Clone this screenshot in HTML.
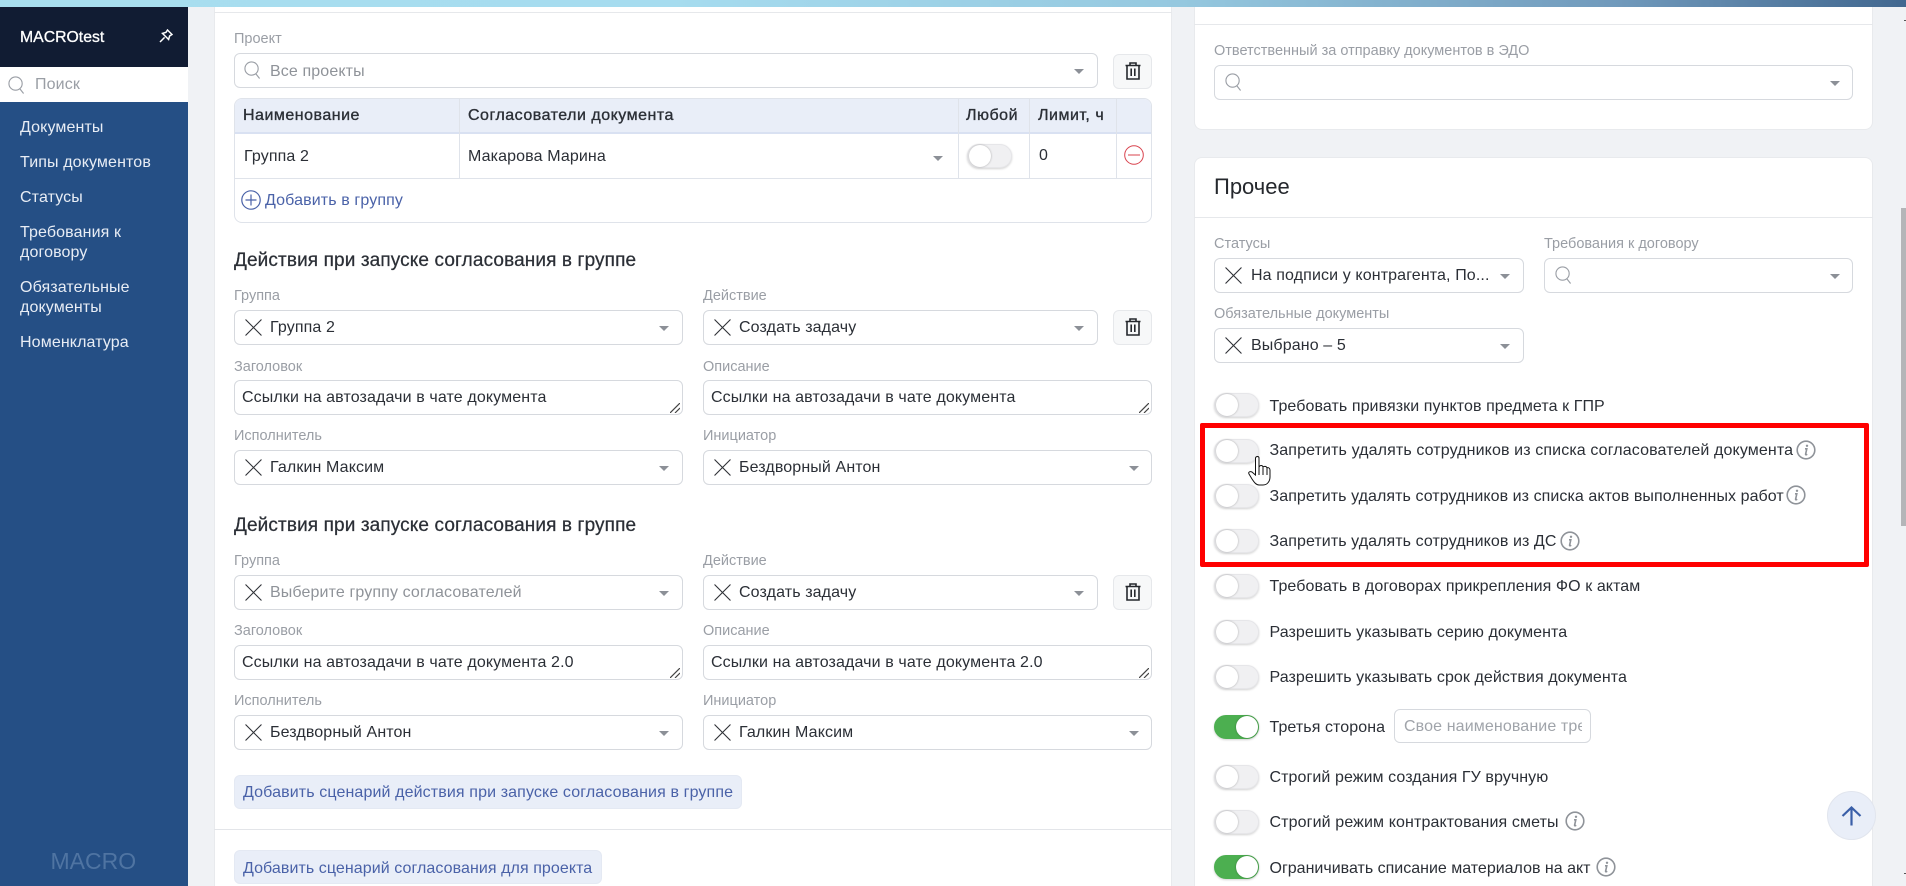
<!DOCTYPE html>
<html lang="ru"><head><meta charset="utf-8"><title>MACRO</title>
<style>
*{box-sizing:border-box}
html,body{margin:0;padding:0;width:1906px;height:886px;overflow:hidden;background:#f0f2f5;font-family:"Liberation Sans","Noto Sans CJK SC",sans-serif;font-size:16px;color:#2b2f36}
.a,.t,.l,.s,.tg,svg.i{position:absolute}
.t{white-space:nowrap;line-height:20px;font-size:16px;letter-spacing:.12px}
.l{white-space:nowrap;line-height:16px;font-size:14.5px;color:#9a9ea5;margin-top:1px}
.s{background:#fff;border:1px solid #d6d9de;border-radius:6px;height:35px}
.tg{width:45px;height:24px;border-radius:12px;background:#f0f0f2;border:1px solid #e6e6e9;box-shadow:0 1px 2px rgba(0,0,0,.18)}
.tg:after{content:"";position:absolute;left:1px;top:0;width:22px;height:22px;border-radius:50%;background:#fff;box-shadow:0 0 2px rgba(0,0,0,.3)}
.tg.on{background:#4caf50;border-color:#4caf50}
.tg.on:after{left:21px}
.h{font-size:19px;letter-spacing:.12px;-webkit-text-stroke:.25px #2b2f36;color:#2b2f36;margin-top:1px}
.b{background:#e9eef8;border:1px solid #e4e9f3;border-radius:6px;position:absolute;height:34px}
.btxt{color:#4a62a8}
.tb{position:absolute;background:#f7f8f9;border:1px solid #e6e8eb;border-radius:6px;width:39px;height:35px}
.th{letter-spacing:.5px;-webkit-text-stroke:.35px #2b2f36}
.n{color:#e8edf5;margin-top:1px}
.r{left:1269.5px;letter-spacing:.08px}
</style></head><body>
<svg width="0" height="0" style="position:absolute">
<symbol id="x" viewBox="0 0 16 16"><path d="M.5 .5L15.5 15.5M15.5 .5L.5 15.5" stroke="#2f3237" stroke-width="1.05" fill="none"/></symbol>
<symbol id="q" viewBox="0 0 18 19"><circle cx="8" cy="8" r="7" stroke="#9a9ea5" stroke-width="1.2" fill="none"/><path d="M12.5 13.5L16.5 18.5" stroke="#9a9ea5" stroke-width="1.2"/></symbol>
<symbol id="ar" viewBox="0 0 10 5"><path d="M0 0H10L5 5Z" fill="#8c9097"/></symbol>
<symbol id="tr" viewBox="0 0 16 18"><path d="M.5 3.5H15.5M5 3V1H11V3M2 3.5V17H14V3.5M6.2 6.5V14M9.8 6.5V14" stroke="#25282d" stroke-width="1.6" fill="none"/></symbol>
<symbol id="rz" viewBox="0 0 10 10"><path d="M0 10L10 0M5 10L10 5" stroke="#444" stroke-width="1.2"/></symbol>
<symbol id="in" viewBox="0 0 20 20"><circle cx="10" cy="10" r="8.8" stroke="#8f9399" stroke-width="1.6" fill="none"/><path d="M9 8.8H10.8L9.6 14.2C9.5 14.9 10.2 15 11.2 14.2" stroke="#8f9399" stroke-width="1.6" fill="none"/><circle cx="11" cy="5.8" r="1.2" fill="#8f9399"/></symbol>
</svg>

<!-- top bar -->
<div class="a" style="left:0;top:0;width:1906px;height:7px;background:linear-gradient(90deg,#a8deef 0%,#a6dcef 35%,#95c8df 62%,#7099bb 85%,#41678f 100%)"></div>

<!-- sidebar -->
<div class="a" style="left:0;top:7px;width:188px;height:60px;background:#111c33"></div>
<div class="a" style="left:0;top:67px;width:188px;height:35px;background:#fff"></div>
<div class="a" style="left:0;top:102px;width:188px;height:784px;background:#254f85"></div>
<div class="t" style="left:20px;top:28px;color:#fff;font-size:15.8px;letter-spacing:0;-webkit-text-stroke:.3px #fff">MACROtest</div>
<svg class="i" style="left:159px;top:29px" width="14" height="14" viewBox="0 0 14 14"><path d="M8.5 1L13 5.5L10.6 7L9.6 10.5L3.5 4.4L7 3.4ZM5.6 8.4L1 13" stroke="#fff" stroke-width="1.5" fill="none"/></svg>
<svg class="i" style="left:8px;top:76px" width="17" height="18"><use href="#q"/></svg>
<div class="t" style="left:35px;top:75px;color:#9a9ea5">Поиск</div>
<div class="t n" style="left:20px;top:117px">Документы</div>
<div class="t n" style="left:20px;top:152px">Типы документов</div>
<div class="t n" style="left:20px;top:187px">Статусы</div>
<div class="t n" style="left:20px;top:222px">Требования к</div>
<div class="t n" style="left:20px;top:242px">договору</div>
<div class="t n" style="left:20px;top:277px">Обязательные</div>
<div class="t n" style="left:20px;top:297px">документы</div>
<div class="t n" style="left:20px;top:332px">Номенклатура</div>
<div class="t" style="left:50.5px;top:851px;font-size:23px;letter-spacing:0;color:#4f74a2">MACRO</div>

<!-- left card -->
<div class="a" style="left:214px;top:7px;width:958px;height:879px;background:#fff;border-left:1px solid #e8eaed;border-right:1px solid #e8eaed"></div>
<div class="a" style="left:214px;top:12px;width:958px;height:1px;background:#e6e8eb"></div>

<div class="l" style="left:234px;top:30px">Проект</div>
<div class="s" style="left:234px;top:53px;width:864px"></div>
<svg class="i" style="left:244px;top:61px" width="17" height="18"><use href="#q"/></svg>
<div class="t" style="left:270px;top:62px;color:#8f9399">Все проекты</div>
<svg class="i" style="left:1074px;top:69px" width="10" height="5"><use href="#ar"/></svg>
<div class="tb" style="left:1113px;top:54px"></div>
<svg class="i" style="left:1125px;top:62px" width="16" height="18"><use href="#tr"/></svg>

<!-- table -->
<div class="a" style="left:234px;top:98px;width:918px;height:125px;border:1px solid #dfe3ea;border-radius:8px;background:#fff;overflow:hidden">
  <div class="a" style="left:0;top:0;width:918px;height:35px;background:#e9eef8;border-bottom:2px solid #d9e1f2"></div>
  <div class="a" style="left:224px;top:0;width:1px;height:79px;background:#dfe3ea"></div>
  <div class="a" style="left:723px;top:0;width:1px;height:79px;background:#dfe3ea"></div>
  <div class="a" style="left:794px;top:0;width:1px;height:79px;background:#dfe3ea"></div>
  <div class="a" style="left:881px;top:0;width:1px;height:79px;background:#dfe3ea"></div>
  <div class="a" style="left:0;top:79px;width:918px;height:1px;background:#dfe3ea"></div>
</div>
<div class="t th" style="left:243px;top:106px">Наименование</div>
<div class="t th" style="left:468px;top:106px">Согласователи документа</div>
<div class="t th" style="left:966px;top:106px">Любой</div>
<div class="t th" style="left:1038px;top:106px">Лимит, ч</div>
<div class="t" style="left:244px;top:147px">Группа 2</div>
<div class="t" style="left:468px;top:147px">Макарова Марина</div>
<svg class="i" style="left:933px;top:156px" width="10" height="5"><use href="#ar"/></svg>
<div class="tg" style="left:967px;top:144px"></div>
<div class="t" style="left:1039px;top:146px">0</div>
<svg class="i" style="left:1123.5px;top:145px" width="20" height="20" viewBox="0 0 20 20"><circle cx="10" cy="10" r="9.3" stroke="#d9434e" stroke-width="1" fill="none"/><path d="M4 10H16" stroke="#d9434e" stroke-width="1"/></svg>
<svg class="i" style="left:241px;top:190px" width="20" height="20" viewBox="0 0 20 20"><circle cx="10" cy="10" r="9.2" stroke="#4a62a8" stroke-width="1.2" fill="none"/><path d="M4.5 10H15.5M10 4.5V15.5" stroke="#4a62a8" stroke-width="1.2"/></svg>
<div class="t btxt" style="left:265px;top:191px">Добавить в группу</div>

<!-- actions 1 -->
<div class="t h" style="left:234px;top:250px">Действия при запуске согласования в группе</div>
<div class="l" style="left:234px;top:287px">Группа</div>
<div class="s" style="left:234px;top:310px;width:449px"></div>
<svg class="i" style="left:245px;top:319px" width="17" height="17"><use href="#x"/></svg>
<div class="t" style="left:270px;top:318px">Группа 2</div>
<svg class="i" style="left:659px;top:326px" width="10" height="5"><use href="#ar"/></svg>
<div class="l" style="left:703px;top:287px">Действие</div>
<div class="s" style="left:703px;top:310px;width:395px"></div>
<svg class="i" style="left:714px;top:319px" width="17" height="17"><use href="#x"/></svg>
<div class="t" style="left:739px;top:318px">Создать задачу</div>
<svg class="i" style="left:1074px;top:326px" width="10" height="5"><use href="#ar"/></svg>
<div class="tb" style="left:1113px;top:310px"></div>
<svg class="i" style="left:1125px;top:318px" width="16" height="18"><use href="#tr"/></svg>

<div class="l" style="left:234px;top:358px">Заголовок</div>
<div class="s" style="left:234px;top:380px;width:449px"></div>
<div class="t" style="left:242px;top:388px">Ссылки на автозадачи в чате документа</div>
<svg class="i" style="left:670px;top:403px" width="10" height="10"><use href="#rz"/></svg>
<div class="l" style="left:703px;top:358px">Описание</div>
<div class="s" style="left:703px;top:380px;width:449px"></div>
<div class="t" style="left:711px;top:388px">Ссылки на автозадачи в чате документа</div>
<svg class="i" style="left:1139px;top:403px" width="10" height="10"><use href="#rz"/></svg>

<div class="l" style="left:234px;top:427px">Исполнитель</div>
<div class="s" style="left:234px;top:450px;width:449px"></div>
<svg class="i" style="left:245px;top:459px" width="17" height="17"><use href="#x"/></svg>
<div class="t" style="left:270px;top:458px">Галкин Максим</div>
<svg class="i" style="left:659px;top:466px" width="10" height="5"><use href="#ar"/></svg>
<div class="l" style="left:703px;top:427px">Инициатор</div>
<div class="s" style="left:703px;top:450px;width:449px"></div>
<svg class="i" style="left:714px;top:459px" width="17" height="17"><use href="#x"/></svg>
<div class="t" style="left:739px;top:458px">Бездворный Антон</div>
<svg class="i" style="left:1129px;top:466px" width="10" height="5"><use href="#ar"/></svg>

<!-- actions 2 -->
<div class="t h" style="left:234px;top:515px">Действия при запуске согласования в группе</div>
<div class="l" style="left:234px;top:552px">Группа</div>
<div class="s" style="left:234px;top:575px;width:449px"></div>
<svg class="i" style="left:245px;top:584px" width="17" height="17"><use href="#x"/></svg>
<div class="t" style="left:270px;top:583px;color:#8f9399">Выберите группу согласователей</div>
<svg class="i" style="left:659px;top:591px" width="10" height="5"><use href="#ar"/></svg>
<div class="l" style="left:703px;top:552px">Действие</div>
<div class="s" style="left:703px;top:575px;width:395px"></div>
<svg class="i" style="left:714px;top:584px" width="17" height="17"><use href="#x"/></svg>
<div class="t" style="left:739px;top:583px">Создать задачу</div>
<svg class="i" style="left:1074px;top:591px" width="10" height="5"><use href="#ar"/></svg>
<div class="tb" style="left:1113px;top:575px"></div>
<svg class="i" style="left:1125px;top:583px" width="16" height="18"><use href="#tr"/></svg>

<div class="l" style="left:234px;top:622px">Заголовок</div>
<div class="s" style="left:234px;top:645px;width:449px"></div>
<div class="t" style="left:242px;top:653px">Ссылки на автозадачи в чате документа 2.0</div>
<svg class="i" style="left:670px;top:668px" width="10" height="10"><use href="#rz"/></svg>
<div class="l" style="left:703px;top:622px">Описание</div>
<div class="s" style="left:703px;top:645px;width:449px"></div>
<div class="t" style="left:711px;top:653px">Ссылки на автозадачи в чате документа 2.0</div>
<svg class="i" style="left:1139px;top:668px" width="10" height="10"><use href="#rz"/></svg>

<div class="l" style="left:234px;top:692px">Исполнитель</div>
<div class="s" style="left:234px;top:715px;width:449px"></div>
<svg class="i" style="left:245px;top:724px" width="17" height="17"><use href="#x"/></svg>
<div class="t" style="left:270px;top:723px">Бездворный Антон</div>
<svg class="i" style="left:659px;top:731px" width="10" height="5"><use href="#ar"/></svg>
<div class="l" style="left:703px;top:692px">Инициатор</div>
<div class="s" style="left:703px;top:715px;width:449px"></div>
<svg class="i" style="left:714px;top:724px" width="17" height="17"><use href="#x"/></svg>
<div class="t" style="left:739px;top:723px">Галкин Максим</div>
<svg class="i" style="left:1129px;top:731px" width="10" height="5"><use href="#ar"/></svg>

<div class="b" style="left:234px;top:775px;width:508px"></div>
<div class="t btxt" style="left:243px;top:783px">Добавить сценарий действия при запуске согласования в группе</div>
<div class="a" style="left:214px;top:829px;width:958px;height:1px;background:#e3e5e9"></div>
<div class="b" style="left:234px;top:850px;width:368px"></div>
<div class="t btxt" style="left:243px;top:859px;letter-spacing:.07px">Добавить сценарий согласования для проекта</div>

<!-- right card 1 -->
<div class="a" style="left:1194px;top:7px;width:679px;height:123px;background:#fff;border:1px solid #e8eaed;border-top:0;border-radius:0 0 8px 8px"></div>
<div class="a" style="left:1194px;top:24px;width:679px;height:1px;background:#e6e8eb"></div>
<div class="l" style="left:1214px;top:42px">Ответственный за отправку документов в ЭДО</div>
<div class="s" style="left:1214px;top:65px;width:639px"></div>
<svg class="i" style="left:1225px;top:73px" width="17" height="18"><use href="#q"/></svg>
<svg class="i" style="left:1830px;top:81px" width="10" height="5"><use href="#ar"/></svg>

<!-- right card 2 -->
<div class="a" style="left:1194px;top:157px;width:679px;height:729px;background:#fff;border:1px solid #e8eaed;border-bottom:0;border-radius:8px 8px 0 0"></div>
<div class="a" style="left:1194px;top:217px;width:679px;height:1px;background:#e6e8eb"></div>
<div class="t" style="left:1214px;top:176px;font-size:22px;letter-spacing:0;line-height:22px;color:#25282d">Прочее</div>
<div class="l" style="left:1214px;top:235px">Статусы</div>
<div class="s" style="left:1214px;top:258px;width:310px"></div>
<svg class="i" style="left:1225px;top:267px" width="17" height="17"><use href="#x"/></svg>
<div class="t" style="left:1251px;top:266px">На подписи у контрагента, По...</div>
<svg class="i" style="left:1500px;top:274px" width="10" height="5"><use href="#ar"/></svg>
<div class="l" style="left:1544px;top:235px">Требования к договору</div>
<div class="s" style="left:1544px;top:258px;width:309px"></div>
<svg class="i" style="left:1555px;top:266px" width="17" height="18"><use href="#q"/></svg>
<svg class="i" style="left:1830px;top:274px" width="10" height="5"><use href="#ar"/></svg>
<div class="l" style="left:1214px;top:305px">Обязательные документы</div>
<div class="s" style="left:1214px;top:328px;width:310px"></div>
<svg class="i" style="left:1225px;top:337px" width="17" height="17"><use href="#x"/></svg>
<div class="t" style="left:1251px;top:336px">Выбрано – 5</div>
<svg class="i" style="left:1500px;top:344px" width="10" height="5"><use href="#ar"/></svg>

<div class="tg" style="left:1214px;top:393px"></div>
<div class="t r" style="top:397px">Требовать привязки пунктов предмета к ГПР</div>
<div class="tg" style="left:1214px;top:439px"></div>
<div class="t" style="left:1269.5px;top:441px">Запретить удалять сотрудников из списка согласователей документа</div>
<svg class="i" style="left:1796px;top:440px" width="20" height="20"><use href="#in"/></svg>
<div class="tg" style="left:1214px;top:484px"></div>
<div class="t r" style="top:487px;letter-spacing:.07px">Запретить удалять сотрудников из списка актов выполненных работ</div>
<svg class="i" style="left:1786px;top:485px" width="20" height="20"><use href="#in"/></svg>
<div class="tg" style="left:1214px;top:529px"></div>
<div class="t r" style="top:532px">Запретить удалять сотрудников из ДС</div>
<svg class="i" style="left:1560px;top:531px" width="20" height="20"><use href="#in"/></svg>
<div class="tg" style="left:1214px;top:574px"></div>
<div class="t r" style="top:577px">Требовать в договорах прикрепления ФО к актам</div>
<div class="tg" style="left:1214px;top:620px"></div>
<div class="t r" style="top:623px">Разрешить указывать серию документа</div>
<div class="tg" style="left:1214px;top:665px"></div>
<div class="t r" style="top:668px">Разрешить указывать срок действия документа</div>
<div class="tg on" style="left:1214px;top:715px"></div>
<div class="t r" style="top:718px">Третья сторона</div>
<div class="s" style="left:1394px;top:709px;width:197px;height:34px"><div class="a" style="left:9px;top:0;width:178px;height:32px;overflow:hidden"><div class="t" style="left:0;top:7px;color:#a0a4aa">Свое наименование требования</div></div></div>
<div class="tg" style="left:1214px;top:765px"></div>
<div class="t r" style="top:768px">Строгий режим создания ГУ вручную</div>
<div class="tg" style="left:1214px;top:810px"></div>
<div class="t" style="left:1269.5px;top:813px">Строгий режим контрактования сметы</div>
<svg class="i" style="left:1565px;top:811px" width="20" height="20"><use href="#in"/></svg>
<div class="tg on" style="left:1214px;top:855px"></div>
<div class="t r" style="top:859px;letter-spacing:0">Ограничивать списание материалов на акт</div>
<svg class="i" style="left:1596px;top:857px" width="20" height="20"><use href="#in"/></svg>

<!-- red box -->
<div class="a" style="left:1200px;top:423px;width:669px;height:144px;border:5px solid #f00;border-radius:2px"></div>

<!-- cursor -->
<svg class="i" style="left:1248px;top:456px" width="23" height="30" viewBox="0 0 23 30"><path d="M7.5 2C8 0 11 0 11 2L11 11C12 9 14.5 9 15 11C16 10 18.5 10 19 12C20 11 22 12 22 14L22 21C22 25 19.5 29 15 29L11 29C8 29 6 26 4 23L1 18C0 16 2 15 4 16L7.5 19Z" fill="#fff" stroke="#111" stroke-width="1"/><path d="M11 11V19M15 11.5V19M19 12.5V19" stroke="#111" stroke-width="1"/></svg>

<!-- up button -->
<div class="a" style="left:1827px;top:791px;width:49px;height:49px;border-radius:50%;background:#e9eef8;border:1px solid #e1e5ee"></div>
<svg class="i" style="left:1841px;top:806px" width="21" height="20" viewBox="0 0 21 20"><path d="M1.5 10L10.5 1.5L19.5 10M10.5 2V19.5" stroke="#3a5fa8" stroke-width="2.2" fill="none"/></svg>

<!-- scrollbar -->
<div class="a" style="left:1901px;top:208px;width:5px;height:318px;background:#b4b5b8"></div>
<div class="a" style="left:1904px;top:20px;width:2px;height:1px;background:#555"></div>
<div class="a" style="left:1904px;top:873px;width:2px;height:1px;background:#555"></div>
</body></html>
